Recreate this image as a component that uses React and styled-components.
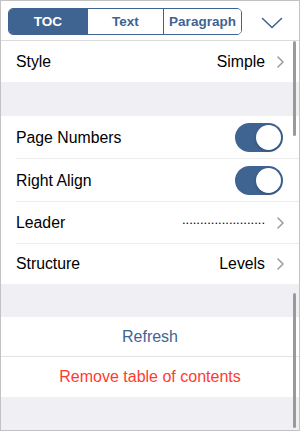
import React, { useState } from 'react';
import styled, { createGlobalStyle } from 'styled-components';

const BLUE = '#3f6491';

const GlobalStyle = createGlobalStyle`
  html, body {
    margin: 0;
    padding: 0;
    background: #ffffff;
  }
  body {
    font-family: 'Liberation Sans', Arial, sans-serif;
    -webkit-font-smoothing: antialiased;
  }
`;

const Frame = styled.div`
  position: relative;
  box-sizing: border-box;
  width: 300px;
  height: 431px;
  border: 1px solid #c2c2c2;
  background: #efeff4;
  overflow: hidden;
`;

const Header = styled.div`
  display: flex;
  align-items: flex-start;
  height: 40px;
  padding: 7px 0 0 7px;
  box-sizing: border-box;
  background: #fff;
  border-bottom: 1px solid #dcdcdc;
`;

const Segmented = styled.div`
  display: flex;
  width: 234px;
  height: 27px;
  box-sizing: border-box;
  border: 1px solid ${BLUE};
  border-radius: 5px;
  overflow: hidden;
`;

const Segment = styled.button`
  flex: ${(p) => p.$w};
  border: none;
  border-left: ${(p) => (p.$first ? 'none' : `1px solid ${BLUE}`)};
  background: ${(p) => (p.$active ? BLUE : '#fff')};
  color: ${(p) => (p.$active ? '#fff' : BLUE)};
  font-family: 'Liberation Sans', Arial, sans-serif;
  font-size: 13.5px;
  font-weight: 700;
  padding: 0;
  display: flex;
  align-items: center;
  justify-content: center;
`;

const Collapse = styled.div`
  width: 22px;
  margin: 9px 0 0 19px;
  display: flex;
`;

const Group = styled.div`
  background: #fff;
`;

const Spacer = styled.div`
  height: ${(p) => p.$h}px;
`;

const Row = styled.div`
  display: flex;
  align-items: center;
  height: ${(p) => p.$h}px;
  padding: 0 15px 0 15px;
  position: relative;
  &::after {
    content: '';
    display: ${(p) => (p.$last ? 'none' : 'block')};
    position: absolute;
    left: 15px;
    right: 0;
    bottom: 0;
    height: 1px;
    background: #ececec;
  }
`;

const Label = styled.span`
  flex: 1;
  font-size: 15.8px;
  color: #000;
`;

const Value = styled.span`
  font-size: 15.8px;
  color: #000;
`;

const Dots = styled.span`
  font-size: 13px;
  letter-spacing: 0;
  color: #000;
  position: relative;
  top: -4px;
`;

const Chevron = styled.span`
  display: flex;
  margin-left: 12px;
`;

const SwitchTrack = styled.button`
  position: relative;
  width: 48px;
  height: 29px;
  border: none;
  padding: 0;
  margin-right: 1px;
  border-radius: 15px;
  background: ${(p) => (p.$on ? BLUE : '#e5e5ea')};
`;

const SwitchKnob = styled.span`
  position: absolute;
  top: 2px;
  left: ${(p) => (p.$on ? '21px' : '2px')};
  width: 25px;
  height: 25px;
  border-radius: 50%;
  background: #fff;
  box-shadow: 0 1px 3px rgba(0, 0, 0, 0.25);
`;

const ActionRow = styled.div`
  height: ${(p) => p.$h}px;
  display: flex;
  align-items: center;
  justify-content: center;
  font-size: 16px;
  color: ${(p) => p.$color};
  border-bottom: ${(p) => (p.$divider ? '1px solid #e2e2e2' : 'none')};
`;

const ScrollThumb = styled.div`
  position: absolute;
  right: 3px;
  top: ${(p) => p.$top}px;
  height: ${(p) => p.$h}px;
  width: 3px;
  border-radius: 2px;
  background: #9a9a9a;
`;

const ChevronRight = () => (
  <svg width="7" height="12" viewBox="0 0 7 12">
    <path d="M1 1 L6 6 L1 11" fill="none" stroke="#9b9b9f" strokeWidth="1.5" strokeLinecap="round" strokeLinejoin="round" />
  </svg>
);

const ChevronDown = () => (
  <svg width="22" height="12" viewBox="0 0 22 12">
    <path d="M1.5 1.5 L11 10.5 L20.5 1.5" fill="none" stroke={BLUE} strokeWidth="1.6" strokeLinecap="round" strokeLinejoin="round" />
  </svg>
);

const Toggle = ({ on, onClick }) => (
  <SwitchTrack $on={on} onClick={onClick}>
    <SwitchKnob $on={on} />
  </SwitchTrack>
);

export default function App() {
  const [tab, setTab] = useState('TOC');
  const [pageNumbers, setPageNumbers] = useState(true);
  const [rightAlign, setRightAlign] = useState(true);

  const tabs = [
    { name: 'TOC', w: 79 },
    { name: 'Text', w: 76 },
    { name: 'Paragraph', w: 78 },
  ];

  return (
    <>
      <GlobalStyle />
      <Frame>
        <Header>
          <Segmented>
            {tabs.map((t, i) => (
              <Segment
                key={t.name}
                $w={t.w}
                $first={i === 0}
                $active={tab === t.name}
                onClick={() => setTab(t.name)}
              >
                {t.name}
              </Segment>
            ))}
          </Segmented>
          <Collapse>
            <ChevronDown />
          </Collapse>
        </Header>

        <Group>
          <Row $h={41} $last>
            <Label>Style</Label>
            <Value>Simple</Value>
            <Chevron><ChevronRight /></Chevron>
          </Row>
        </Group>

        <Spacer $h={34} />

        <Group>
          <Row $h={43}>
            <Label>Page Numbers</Label>
            <Toggle on={pageNumbers} onClick={() => setPageNumbers(!pageNumbers)} />
          </Row>
          <Row $h={43}>
            <Label>Right Align</Label>
            <Toggle on={rightAlign} onClick={() => setRightAlign(!rightAlign)} />
          </Row>
          <Row $h={42}>
            <Label>Leader</Label>
            <Dots>.......................</Dots>
            <Chevron><ChevronRight /></Chevron>
          </Row>
          <Row $h={40} $last>
            <Label>Structure</Label>
            <Value>Levels</Value>
            <Chevron><ChevronRight /></Chevron>
          </Row>
        </Group>

        <Spacer $h={33} />

        <Group>
          <ActionRow $h={39} $color={BLUE} $divider>Refresh</ActionRow>
          <ActionRow $h={40} $color="#ff3b30">Remove table of contents</ActionRow>
        </Group>

        <ScrollThumb $top={40} $h={95} />
        <ScrollThumb $top={292} $h={135} />
      </Frame>
    </>
  );
}
